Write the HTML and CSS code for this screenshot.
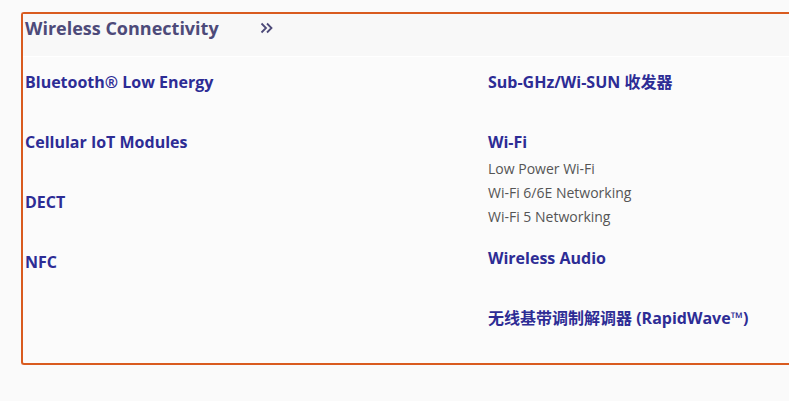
FILE: index.html
```html
<!DOCTYPE html>
<html lang="zh-CN">
<head>
<meta charset="utf-8">
<title>Wireless Connectivity</title>
<link rel="stylesheet" href="styles.css">
</head>
<body>
<div class="panel">
  <div class="panel-head">
    <span class="panel-title">Wireless Connectivity</span>
    <svg class="chev" width="14" height="12" viewBox="0 0 14 12" aria-hidden="true">
      <path d="M1.5 1.5 L6 6 L1.5 10.5 M7 1.5 L11.5 6 L7 10.5" fill="none" stroke="#4d4a79" stroke-width="1.8"/>
    </svg>
  </div>
  <div class="panel-body">
    <ul class="col">
      <li class="item"><a class="item-link" href="#">Bluetooth® Low Energy</a></li>
      <li class="item"><a class="item-link" href="#">Cellular IoT Modules</a></li>
      <li class="item"><a class="item-link" href="#">DECT</a></li>
      <li class="item"><a class="item-link" href="#">NFC</a></li>
    </ul>
    <ul class="col">
      <li class="item"><a class="item-link" href="#">Sub-GHz/Wi-SUN 收发器</a></li>
      <li class="item"><a class="item-link" href="#">Wi-Fi</a>
        <ul class="subs">
          <li><a class="sub-link" href="#">Low Power Wi-Fi</a></li>
          <li><a class="sub-link" href="#">Wi-Fi 6/6E Networking</a></li>
          <li><a class="sub-link" href="#">Wi-Fi 5 Networking</a></li>
        </ul>
      </li>
      <li class="item"><a class="item-link" href="#">Wireless Audio</a></li>
      <li class="item"><a class="item-link" href="#">无线基带调制解调器 (RapidWave™)</a></li>
    </ul>
  </div>
</div>
</body>
</html>
```

FILE: styles.css
```css
html, body {
  margin: 0;
  padding: 0;
  overflow: hidden;
  background: #fafafa;
  font-family: "Open Sans", "Noto Sans CJK SC", sans-serif;
}

body {
  padding: 12px 0 0 21px;
}

.panel {
  box-sizing: border-box;
  height: 353px;
  border: 2px solid #d95b1f;
  border-right: none;
  border-radius: 3px 0 0 3px;
  background: #fbfbfb;
}

.panel-head {
  display: flex;
  align-items: flex-start;
  height: 42px;
  padding: 0 0 0 2px;
  background: #f8f8f8;
  border-bottom: 1px solid #ffffff;
}

.panel-title {
  font-size: 18px;
  font-weight: 700;
  color: #4d4a79;
  line-height: 28px;
}

.chev {
  margin-left: 41px;
  margin-top: 8px;
}

.panel-body {
  display: grid;
  grid-template-columns: 463px 1fr;
  padding: 13px 0 0 2px;
}

.col {
  list-style: none;
  margin: 0;
  padding: 0;
}

.item {
  min-height: 43px;
  margin-bottom: 17px;
}

.item-link {
  display: block;
  font-size: 16px;
  font-weight: 700;
  line-height: 24px;
  color: #2d2c95;
  text-decoration: none;
}

.subs {
  list-style: none;
  margin: 3px 0 0;
  padding: 0;
}

.sub-link {
  display: block;
  font-size: 14px;
  line-height: 24px;
  color: #555555;
  text-decoration: none;
}
```
